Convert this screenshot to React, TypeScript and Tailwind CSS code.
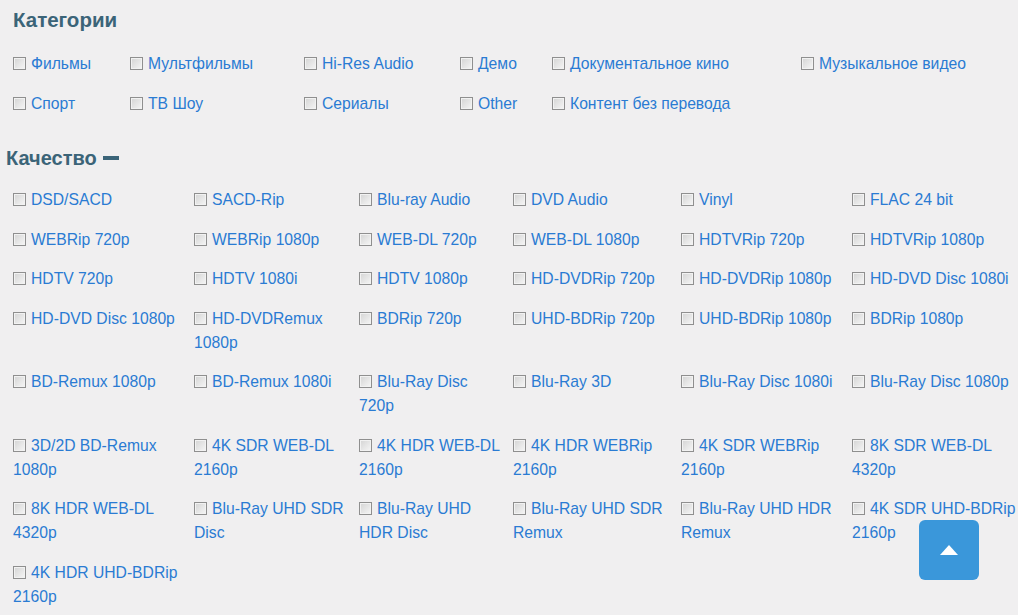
import React from "react";

const CATEGORIES = [
  "Фильмы",
  "Мультфильмы",
  "Hi-Res Audio",
  "Демо",
  "Документальное кино",
  "Музыкальное видео",
  "Спорт",
  "ТВ Шоу",
  "Сериалы",
  "Other",
  "Контент без перевода",
];

// line breaks kept as in the original layout
const QUALITY = [
  "DSD/SACD", "SACD-Rip", "Blu-ray Audio", "DVD Audio", "Vinyl", "FLAC 24 bit",
  "WEBRip 720p", "WEBRip 1080p", "WEB-DL 720p", "WEB-DL 1080p", "HDTVRip 720p", "HDTVRip 1080p",
  "HDTV 720p", "HDTV 1080i", "HDTV 1080p", "HD-DVDRip 720p", "HD-DVDRip 1080p", "HD-DVD Disc 1080i",
  "HD-DVD Disc 1080p", "HD-DVDRemux\n1080p", "BDRip 720p", "UHD-BDRip 720p", "UHD-BDRip 1080p", "BDRip 1080p",
  "BD-Remux 1080p", "BD-Remux 1080i", "Blu-Ray Disc\n720p", "Blu-Ray 3D", "Blu-Ray Disc 1080i", "Blu-Ray Disc 1080p",
  "3D/2D BD-Remux\n1080p", "4K SDR WEB-DL\n2160p", "4K HDR WEB-DL\n2160p", "4K HDR WEBRip\n2160p", "4K SDR WEBRip\n2160p", "8K SDR WEB-DL\n4320p",
  "8K HDR WEB-DL\n4320p", "Blu-Ray UHD SDR\nDisc", "Blu-Ray UHD\nHDR Disc", "Blu-Ray UHD SDR\nRemux", "Blu-Ray UHD HDR\nRemux", "4K SDR UHD-BDRip\n2160p",
  "4K HDR UHD-BDRip\n2160p",
];

function Box() {
  return (
    <span className="inline-block w-[13px] h-[13px] mr-[5px] align-[-1px] border border-[#8f8f8f] bg-gradient-to-br from-[#d4d4d4] to-[#f6f6f6] shadow-[inset_0_0_0_1px_#f2f2f2]" />
  );
}

function Item({ label }: { label: string }) {
  return (
    <div className="py-[7.75px] pr-[4px] leading-[24px] whitespace-pre text-[#2a7bd3]">
      <Box />
      {label}
    </div>
  );
}

export default function App() {
  return (
    <div
      className="relative w-[1018px] h-[615px] overflow-hidden bg-[#f0eff0] text-[15.7px]"
      style={{ fontFamily: '"Liberation Sans", Arial, sans-serif' }}
    >
      <div className="pt-[8px] pl-[13px]">
        <h2 className="text-[20.5px] leading-[24px] font-bold text-[#3b6478]">Категории</h2>
        <div className="mt-[12.5px] grid grid-cols-[117px_174px_156px_92px_249px_1fr]">
          {CATEGORIES.map((c) => (
            <Item key={c} label={c} />
          ))}
        </div>
      </div>

      <div className="mt-[22.5px]">
        <h2 className="pl-[6px] text-[20px] leading-[24px] font-bold text-[#3b6478] flex items-center gap-[6px]">
          Качество
          <span className="inline-block w-[16px] h-[4px] bg-[#3b6478]" />
        </h2>
        <div className="mt-[10.5px] pl-[13px] grid grid-cols-[181px_165px_154px_168px_171px_1fr]">
          {QUALITY.map((q) => (
            <Item key={q} label={q} />
          ))}
        </div>
      </div>

      <button className="absolute left-[919px] top-[520px] w-[60px] h-[60px] rounded-[6px] bg-[#3a97da] flex items-center justify-center">
        <svg width="18" height="10" viewBox="0 0 18 10">
          <path d="M9 0 L18 10 L0 10 Z" fill="#ffffff" />
        </svg>
      </button>
    </div>
  );
}
